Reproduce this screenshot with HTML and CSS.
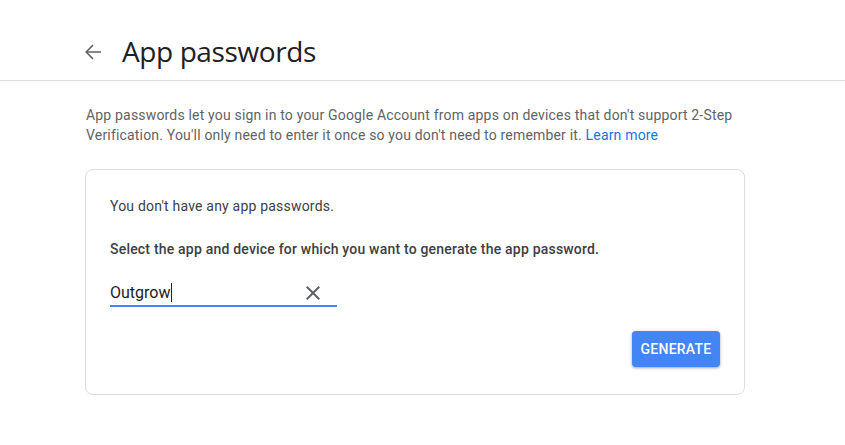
FILE: index.html
```html
<!DOCTYPE html>
<html>
<head>
<meta charset="utf-8">
<link rel="stylesheet" href="styles.css">
</head>
<body>
<header class="topbar">
  <div class="back" aria-label="Back">
    <svg width="24" height="24" viewBox="0 0 24 24"><path d="M20 11.25H6.9l5.6-5.6L11.45 4.6 4.05 12l7.4 7.4 1.05-1.05-5.6-5.6H20z" fill="#5f6368"/></svg>
  </div>
  <h1 class="title">App passwords</h1>
</header>
<main class="content">
  <p class="intro">App passwords let you sign in to your Google Account from apps on devices that don't support 2-Step Verification. You'll only need to enter it once so you don't need to remember it. <a class="link" href="#">Learn more</a></p>
  <section class="card">
    <p class="empty">You don't have any app passwords.</p>
    <p class="select">Select the app and device for which you want to generate the app password.</p>
    <div class="field">
      <span class="value">Outgrow<span class="caret"></span></span>
      <svg class="clear" width="24" height="24" viewBox="0 0 24 24"><path d="M19 6.41L17.59 5 12 10.59 6.41 5 5 6.41 10.59 12 5 17.59 6.41 19 12 13.41 17.59 19 19 17.59 13.41 12z" fill="#5f6368"/></svg>
    </div>
    <div class="actions">
      <button class="generate">GENERATE</button>
    </div>
  </section>
</main>
</body>
</html>
```
FILE: styles.css
```css
html, body {
  margin: 0;
  padding: 0;
  background: #fff;
  font-family: Roboto, "Liberation Sans", Arial, sans-serif;
}
.topbar {
  display: flex;
  align-items: center;
  height: 81px;
  border-bottom: 1px solid #dadce0;
  padding: 22px 0 0 81px;
  box-sizing: border-box;
}
.back {
  width: 24px;
  height: 24px;
  margin-top: 1px;
}
.title {
  margin: 0 0 0 17px;
  font-family: "Open Sans", Roboto, sans-serif;
  font-weight: 400;
  font-size: 28px;
  line-height: 36px;
  color: #202124;
  letter-spacing: -0.4px;
}
.content {
  padding: 24px 0 0 85px;
  width: 690px;
}
.intro {
  margin: 0 0 0 1px;
  font-size: 14px;
  line-height: 20px;
  letter-spacing: 0.18px;
  color: #5f6368;
}
.link {
  color: #1a73e8;
  text-decoration: none;
}
.card {
  margin-top: 24px;
  width: 660px;
  height: 226px;
  box-sizing: border-box;
  border: 1px solid #dadce0;
  border-radius: 8px;
  padding: 26px 24px 0 24px;
}
.empty {
  margin: 0;
  font-size: 14px;
  line-height: 20px;
  letter-spacing: 0.2px;
  color: #3c4043;
}
.select {
  margin: 23px 0 0 0;
  font-size: 14px;
  line-height: 20px;
  font-weight: 500;
  letter-spacing: 0.2px;
  color: #3c4043;
}
.field {
  margin-top: 21px;
  width: 227px;
  height: 27px;
  box-sizing: border-box;
  border-bottom: 2px solid #4285f4;
  display: flex;
  align-items: center;
  justify-content: space-between;
}
.value {
  font-size: 16px;
  color: #202124;
  display: flex;
  align-items: center;
}
.caret {
  display: inline-block;
  width: 1px;
  height: 19px;
  background: #202124;
  margin-left: 1px;
}
.clear {
  margin-right: 12px;
}
.actions {
  display: flex;
  justify-content: flex-end;
  margin-top: 24px;
}
.generate {
  width: 88px;
  height: 36px;
  border: none;
  border-radius: 4px;
  background: #4285f4;
  color: #fff;
  font-family: Roboto, sans-serif;
  font-weight: 500;
  font-size: 14px;
  letter-spacing: 0.25px;
  box-shadow: 0 1px 2px rgba(60,64,67,0.3), 0 1px 3px 1px rgba(60,64,67,0.15);
  padding: 0;
}
```
